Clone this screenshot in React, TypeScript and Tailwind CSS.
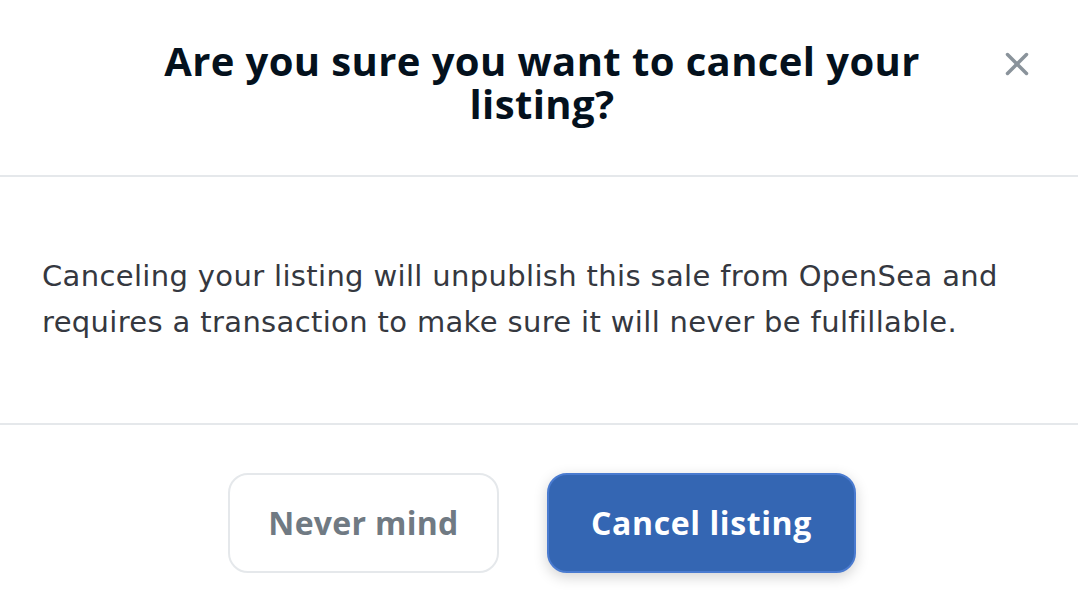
import { X } from "lucide-react"

export default function App() {
  return (
    <div
      className="w-[1078px] h-[616px] overflow-hidden bg-white text-[#04111d]"
      style={{ fontFamily: '"Open Sans", "Liberation Sans", sans-serif' }}
    >
      <header className="relative h-[175px] flex items-center justify-center pl-[126px] pr-[120px]">
        <h1 className="text-center text-[40px] leading-[43px] font-bold tracking-[0.4px] pb-[12px]">
          Are you sure you want to cancel your
          <br />
          listing?
        </h1>
        <button className="absolute right-[42px] top-[45px] text-[#8a939b]">
          <X size={38} strokeWidth={2.2} />
        </button>
      </header>

      <div className="h-[2px] bg-[#e5e8eb]" />

      <section className="h-[246px] flex items-center px-[42px]">
        <p
          className="text-[29px] leading-[46px] tracking-[0.35px] text-[#353840] pb-[2px]"
          style={{ fontFamily: '"DejaVu Sans", "Open Sans", sans-serif' }}
        >
          Canceling your listing will unpublish this sale from OpenSea and
          <br />
          requires a transaction to make sure it will never be fulfillable.
        </p>
      </section>

      <div className="h-[2px] bg-[#e5e8eb]" />

      <footer className="flex justify-center gap-[48px] pt-[48px] pl-[6px]">
        <button className="w-[271px] h-[100px] rounded-[20px] border-2 border-[#e5e8eb] bg-white text-[#707a83] text-[32px] font-bold tracking-[0.3px]">
          Never mind
        </button>
        <button className="w-[309px] h-[100px] rounded-[20px] bg-[#3466b3] border-2 border-[#4a7bd0] text-white text-[32px] font-bold tracking-[0.6px] shadow-[0_4px_14px_rgba(0,0,0,0.18)]">
          Cancel listing
        </button>
      </footer>
    </div>
  )
}
